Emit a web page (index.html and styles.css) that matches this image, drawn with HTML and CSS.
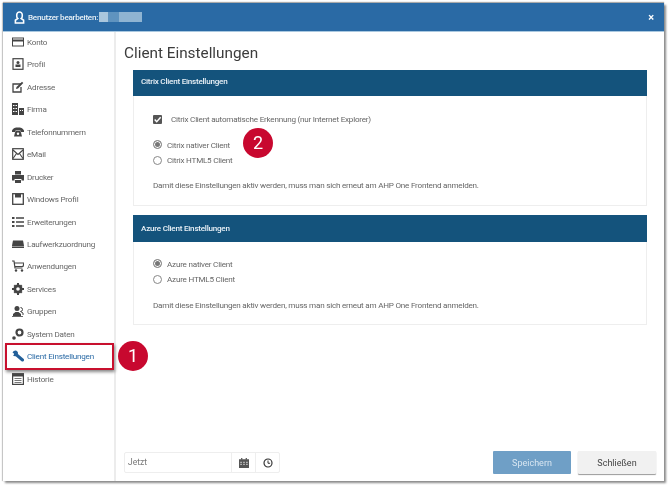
FILE: index.html
```html
<!DOCTYPE html>
<html lang="de">
<head>
<meta charset="utf-8">
<title>Client Einstellungen</title>
<link rel="stylesheet" href="styles.css">
</head>
<body>
<div class="window">
  <header class="titlebar">
    <svg class="user-icon" viewBox="0 0 12 14" width="11" height="13"><path d="M6 1a3 3 0 0 0-3 3v1.500c0 1 .5 2 1.200 2.600L1.500 10v3h9v-3L7.800 8.100C8.500 7.500 9 6.500 9 5.500V4a3 3 0 0 0-3-3z" fill="none" stroke="#fff" stroke-width="1.700"/></svg>
    <span class="titlebar-text">Benutzer bearbeiten:</span>
    <span class="redacted"><i></i><i></i><i></i></span>
    <span class="close">×</span>
  </header>
  <div class="content">
    <nav class="sidebar">
      <a class="nav-item"><svg viewBox="0 0 12 12"><rect x=".5" y="2" width="11" height="8" fill="none" stroke="#444" stroke-width="1"/><rect x="1" y="3.500" width="10" height="2" fill="#444"/></svg>Konto</a>
      <a class="nav-item"><svg viewBox="0 0 12 12"><rect x="1" y=".7" width="10" height="10.600" fill="none" stroke="#444" stroke-width="1.200"/><circle cx="6" cy="4.500" r="1.500" fill="#444"/><rect x="3.500" y="6.500" width="5" height="2.500" fill="#444"/></svg>Profil</a>
      <a class="nav-item"><svg viewBox="0 0 12 12"><path d="M9 3H1v8h8V6" fill="none" stroke="#444" stroke-width="1.300"/><path d="M4 8l.5-2L10 .8l1.300 1.300L6 7.500z" fill="#444"/></svg>Adresse</a>
      <a class="nav-item"><svg viewBox="0 0 12 12"><path d="M0 0h6v12H0zM7 5h5v7H7z" fill="#444"/><path d="M1 2h1.500v1H1zM3.500 2H5v1H3.500zM1 5h1.500v1H1zM3.500 5H5v1H3.500zM1 8h1.500v1H1zM3.500 8H5v1H3.500zM8 7h1v1H8zM10 7h1v1h-1z" fill="#fff"/></svg>Firma</a>
      <a class="nav-item"><svg viewBox="0 0 12 12"><path d="M0 4.500C1 2 3.500 1.500 6 1.500S11 2 12 4.500V6H8.500V4.500h-5V6H0z" fill="#444"/><path d="M3 6.500L4 5h4l1 1.500 1 4H2z" fill="#444"/><circle cx="6" cy="7.800" r="1.200" fill="#fff"/></svg>Telefonnummern</a>
      <a class="nav-item"><svg viewBox="0 0 12 12"><rect x=".7" y=".7" width="10.600" height="10.600" fill="none" stroke="#444" stroke-width="1.200"/><path d="M1 2l5 4.500L11 2M1 10.500L4.500 5.500M11 10.500L7.500 5.500" fill="none" stroke="#444" stroke-width="1.100"/></svg>eMail</a>
      <a class="nav-item"><svg viewBox="0 0 12 12"><path d="M3 0h6v3.500H3zM0 4h12v5.500H9.500V8h-7v1.500H0zM3 9h6v3H3z" fill="#444"/></svg>Drucker</a>
      <a class="nav-item"><svg viewBox="0 0 12 12"><rect x=".7" y=".7" width="10.600" height="10.600" fill="none" stroke="#444" stroke-width="1.300"/><path d="M3 1h6v3.500H3z" fill="#444"/></svg>Windows Profil</a>
      <a class="nav-item"><svg viewBox="0 0 12 12"><path d="M0 1h2.500v2H0zM0 5h2.500v2H0zM0 9h2.500v2H0zM4 1.300h8v1.400H4zM4 5.300h8v1.400H4zM4 9.300h8v1.400H4z" fill="#444"/></svg>Erweiterungen</a>
      <a class="nav-item"><svg viewBox="0 0 12 12"><path d="M1 2.500h10l1 5V10H0V7.500z" fill="#444"/><rect x="0" y="8" width="12" height=".7" fill="#bbb"/></svg>Laufwerkzuordnung</a>
      <a class="nav-item"><svg viewBox="0 0 12 12"><path d="M0 1h2l1 7h7.500M2.500 3H12l-1 3.500H3" fill="none" stroke="#444" stroke-width="1.200"/><circle cx="4" cy="10.500" r="1.200" fill="#444"/><circle cx="10" cy="10.500" r="1.200" fill="#444"/></svg>Anwendungen</a>
      <a class="nav-item"><svg viewBox="0 0 12 12"><path d="M6 1.500a4.500 4.500 0 1 0 0 9 4.500 4.500 0 0 0 0-9zm0 2.700a1.800 1.800 0 1 1 0 3.600 1.800 1.800 0 0 1 0-3.600z" fill="#444" fill-rule="evenodd"/><path d="M5 0h2v2H5zM5 10h2v2H5zM0 5h2v2H0zM10 5h2v2h-2zM1.500 3l1.500-1.500 1 1-1.500 1.500zM10.500 3L9 1.500l-1 1 1.500 1.500zM1.500 9L3 10.500l1-1L2.500 8zM10.500 9L9 10.500l-1-1L9.500 8z" fill="#444"/></svg>Services</a>
      <a class="nav-item"><svg viewBox="0 0 12 12"><circle cx="5" cy="3.500" r="2.500" fill="#444"/><path d="M1 11V9l2.500-2h3L9 9v2z" fill="#444"/><path d="M8.500 2.500a2 2 0 0 1 0 4l2.500 1.500v2" fill="none" stroke="#444"/><rect x="0" y="11" width="11" height=".8" fill="#444"/></svg>Gruppen</a>
      <a class="nav-item"><svg viewBox="0 0 12 12"><circle cx="7.500" cy="4.500" r="3" fill="none" stroke="#444" stroke-width="2.200"/><circle cx="2" cy="10" r="1.800" fill="#444"/></svg>System Daten</a>
      <a class="nav-item active"><svg viewBox="0 0 12 12"><path d="M3.500 4l7 6" fill="none" stroke="#23609a" stroke-width="3" stroke-linecap="round"/><path d="M4 .5A3.500 3.500 0 0 0 .5 2.500L2.500 4 1 5.500A3.500 3.500 0 0 0 5.500 5L6 3C6 2 5 1 4 .5z" fill="#23609a"/></svg>Client Einstellungen</a>
      <a class="nav-item"><svg viewBox="0 0 12 12"><rect x=".6" y=".6" width="10.800" height="10.800" fill="none" stroke="#444" stroke-width="1.200"/><path d="M1 1h10v2.500H1z" fill="#444"/><path d="M2.500 5h7v1h-7zM2.500 7h7v1h-7zM2.500 9h7v1h-7z" fill="#777"/></svg>Historie</a>
    </nav>
    <main class="main">
      <h1 class="page-title">Client Einstellungen</h1>
      <section class="card card-citrix">
        <h2 class="card-head">Citrix Client Einstellungen</h2>
        <div class="card-body">
          <label class="check-row"><span class="checkbox"><svg viewBox="0 0 8 8" width="9" height="9"><path d="M1.500 4l1.800 2 3.500-4" fill="none" stroke="#fff" stroke-width="1.300"/></svg></span>Citrix Client automatische Erkennung (nur Internet Explorer)</label>
          <div class="radio-group">
            <label class="radio-row"><span class="radio on"></span>Citrix nativer Client</label>
            <label class="radio-row"><span class="radio"></span>Citrix HTML5 Client</label>
          </div>
          <p class="note">Damit diese Einstellungen aktiv werden, muss man sich erneut am AHP One Frontend anmelden.</p>
        </div>
      </section>
      <section class="card card-azure">
        <h2 class="card-head">Azure Client Einstellungen</h2>
        <div class="card-body">
          <div class="radio-group">
            <label class="radio-row"><span class="radio on"></span>Azure nativer Client</label>
            <label class="radio-row"><span class="radio"></span>Azure HTML5 Client</label>
          </div>
          <p class="note">Damit diese Einstellungen aktiv werden, muss man sich erneut am AHP One Frontend anmelden.</p>
        </div>
      </section>
      <footer class="footer">
        <div class="datefield">
          <span class="date-text">Jetzt</span>
          <span class="date-btn"><svg viewBox="0 0 12 12" width="10" height="10"><path d="M0 1.500h12V12H0z" fill="#555"/><path d="M2.500 0h1.500v2H2.500zM8 0h1.500v2H8z" fill="#555"/><path d="M1.500 4.500h2v1.500h-2zM5 4.500h2v1.500H5zM8.500 4.500h2v1.500h-2zM1.500 7h2v1.500h-2zM5 7h2v1.500H5zM8.500 7h2v1.500h-2z" fill="#bbb"/></svg></span>
          <span class="date-btn"><svg viewBox="0 0 12 12" width="10" height="10"><circle cx="6" cy="6" r="4.800" fill="none" stroke="#333" stroke-width="1.400"/><path d="M6 3v3.300h2.500" fill="none" stroke="#333" stroke-width="1.200"/></svg></span>
        </div>
        <div class="actions">
          <button class="btn btn-save">Speichern</button>
          <button class="btn btn-close">Schließen</button>
        </div>
      </footer>
    </main>
  </div>
  <div class="marker-box"></div>
  <span class="badge badge-one">1</span>
  <span class="badge badge-two">2</span>
</div>
</body>
</html>
```
FILE: styles.css
```css
* { box-sizing: border-box; }
html, body { margin: 0; padding: 0; background: #fff; }
body { width: 670px; height: 486px; padding: 3px 0 0 3px; font-family: Roboto, "Liberation Sans", sans-serif; overflow: hidden; }
.window { position: relative; width: 661px; height: 478px; background: #fff; display: flex; flex-direction: column; box-shadow: 2px 2px 2px #8c8c8c, 0 -1px 1px #aaa, -1px 0 1px #ccc; filter: blur(0.3px); }
.titlebar { height: 29px; flex: none; background: #2a6aa5; border-bottom: 1px solid #a9c8e0; display: flex; align-items: center; padding: 0 10px 0 11px; color: #fff; }
.user-icon { flex: none; margin-right: 3px; }
.titlebar-text { font-size: 8.100px; letter-spacing: -0.25px; font-weight: 500; color: #e8f0f6; }
.redacted { display: flex; margin-left: 1px; height: 10px; }
.redacted i { display: block; height: 10px; background: #7fa8cb; }
.redacted i:nth-child(1) { width: 9px; background: #a9c6dd; }
.redacted i:nth-child(2) { width: 11px; background: #5f93bf; }
.redacted i:nth-child(3) { width: 23px; background: #8fb4d2; }
.close { margin-left: auto; font-size: 11px; font-weight: 700; line-height: 1; }
.content { flex: 1; display: flex; min-height: 0; }
.sidebar { width: 113px; flex: none; border-right: 2px solid #ececec; display: flex; flex-direction: column; }
.nav-item { height: 22.450px; display: flex; align-items: center; padding-left: 9px; font-size: 8.100px; letter-spacing: -0.2px; color: #666; white-space: nowrap; }
.nav-item:first-child { margin-top: -1.200px; }
.nav-item svg { width: 12px; height: 12px; margin-right: 3px; flex: none; }
.nav-item.active { color: #2a6aa5; }
.main { flex: 1; display: flex; flex-direction: column; padding: 0 8px 0 8px; min-width: 0; }
.page-title { margin: 11px 0 0; font-size: 15.300px; line-height: 20px; font-weight: 400; color: #3c3c3c; }
.card { margin: 7px 9px 0 9px; border: 1px solid #eee; border-top: 0; }
.card-azure { margin-top: 9px; }
.card-head { margin: 0 -1px; background: #14537c; color: #e8f0f6; font-size: 8.100px; letter-spacing: -0.24px; font-weight: 500; height: 26px; line-height: 23px; padding-left: 8px; }
.card-citrix { height: 136px; }
.card-azure { height: 110px; }
.card-azure .card-head { height: 27px; line-height: 26px; }
.card-body { padding: 12px 0 0 19px; font-size: 8.100px; letter-spacing: -0.22px; color: #666; }
.check-row { display: flex; align-items: center; height: 22px; }
.checkbox { width: 9px; height: 9px; margin-right: 9px; background: #555; border-radius: 1px; display: flex; }
.radio-group { margin-top: 7px; }
.radio-row { display: flex; align-items: center; height: 15.500px; }
.radio { width: 9px; height: 9px; border-radius: 50%; border: 1px solid #888; margin-right: 5px; background: #fff; }
.radio.on { background: #777; box-shadow: inset 0 0 0 1px #fff; }
.note { margin: 11px 0 0; line-height: 12px; }
.card-azure .card-body { padding-top: 7px; }
.card-azure .note { margin-top: 12px; }
.footer { margin-top: auto; height: 30px; display: flex; align-items: flex-start; justify-content: space-between; }
.datefield { display: flex; width: 156px; height: 21px; margin-top: 1px; border: 1px solid #eee; border-radius: 2px; }
.date-text { flex: 1; font-size: 8.500px; color: #777; line-height: 19px; padding-left: 3px; }
.date-btn { width: 24px; border-left: 1px solid #eee; display: flex; align-items: center; justify-content: center; }
.actions { display: flex; gap: 7px; }
.btn { width: 78px; height: 23px; border: 0; border-radius: 1px; font-family: inherit; font-size: 9px; }
.btn-save { background: #6f9fc6; color: #d8e6f1; }
.btn-close { background: #f1f1f1; color: #444; box-shadow: 0 1px 1px #999; }
.marker-box { position: absolute; left: 2px; top: 340px; width: 109px; height: 27px; border: 2px solid #c8102e; box-shadow: 1px 2px 3px #888; }
.badge { position: absolute; width: 30px; height: 30px; border-radius: 50%; background: #c8082f; color: #fff; font-size: 18px; line-height: 30px; text-align: center; }
.badge-one { left: 115px; top: 338px; }
.badge-two { left: 240px; top: 125px; }
```
